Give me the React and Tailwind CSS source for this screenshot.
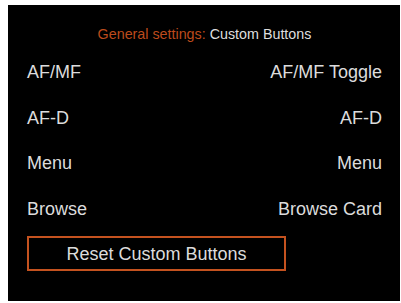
export default function App() {
  const rows = [
    ["AF/MF", "AF/MF Toggle"],
    ["AF-D", "AF-D"],
    ["Menu", "Menu"],
    ["Browse", "Browse Card"],
  ];
  return (
    <div className="bg-white w-[401px] h-[303px] pt-[5px] pl-[8px]">
      <div className="bg-black w-[392px] h-[296px] pl-[19px] pr-[18px] pt-[19px] font-['Liberation_Sans',Arial,sans-serif] text-[#dcdcdc]">
        <div className="h-[26px] text-center text-[14.3px] leading-[20px]">
          <span className="text-[#bd4b1c]">General settings: </span>
          <span className="text-[#dedede]">Custom Buttons</span>
        </div>
        {rows.map(([l, r]) => (
          <div key={l} className="flex justify-between h-[45.5px] leading-[45.5px] text-[18px]">
            <span>{l}</span>
            <span>{r}</span>
          </div>
        ))}
        <div className="mt-[4px] w-[259px] h-[35px] border-2 border-[#c4521f] pt-[2px] text-center text-[18px] leading-[29px]">
          Reset Custom Buttons
        </div>
      </div>
    </div>
  );
}
